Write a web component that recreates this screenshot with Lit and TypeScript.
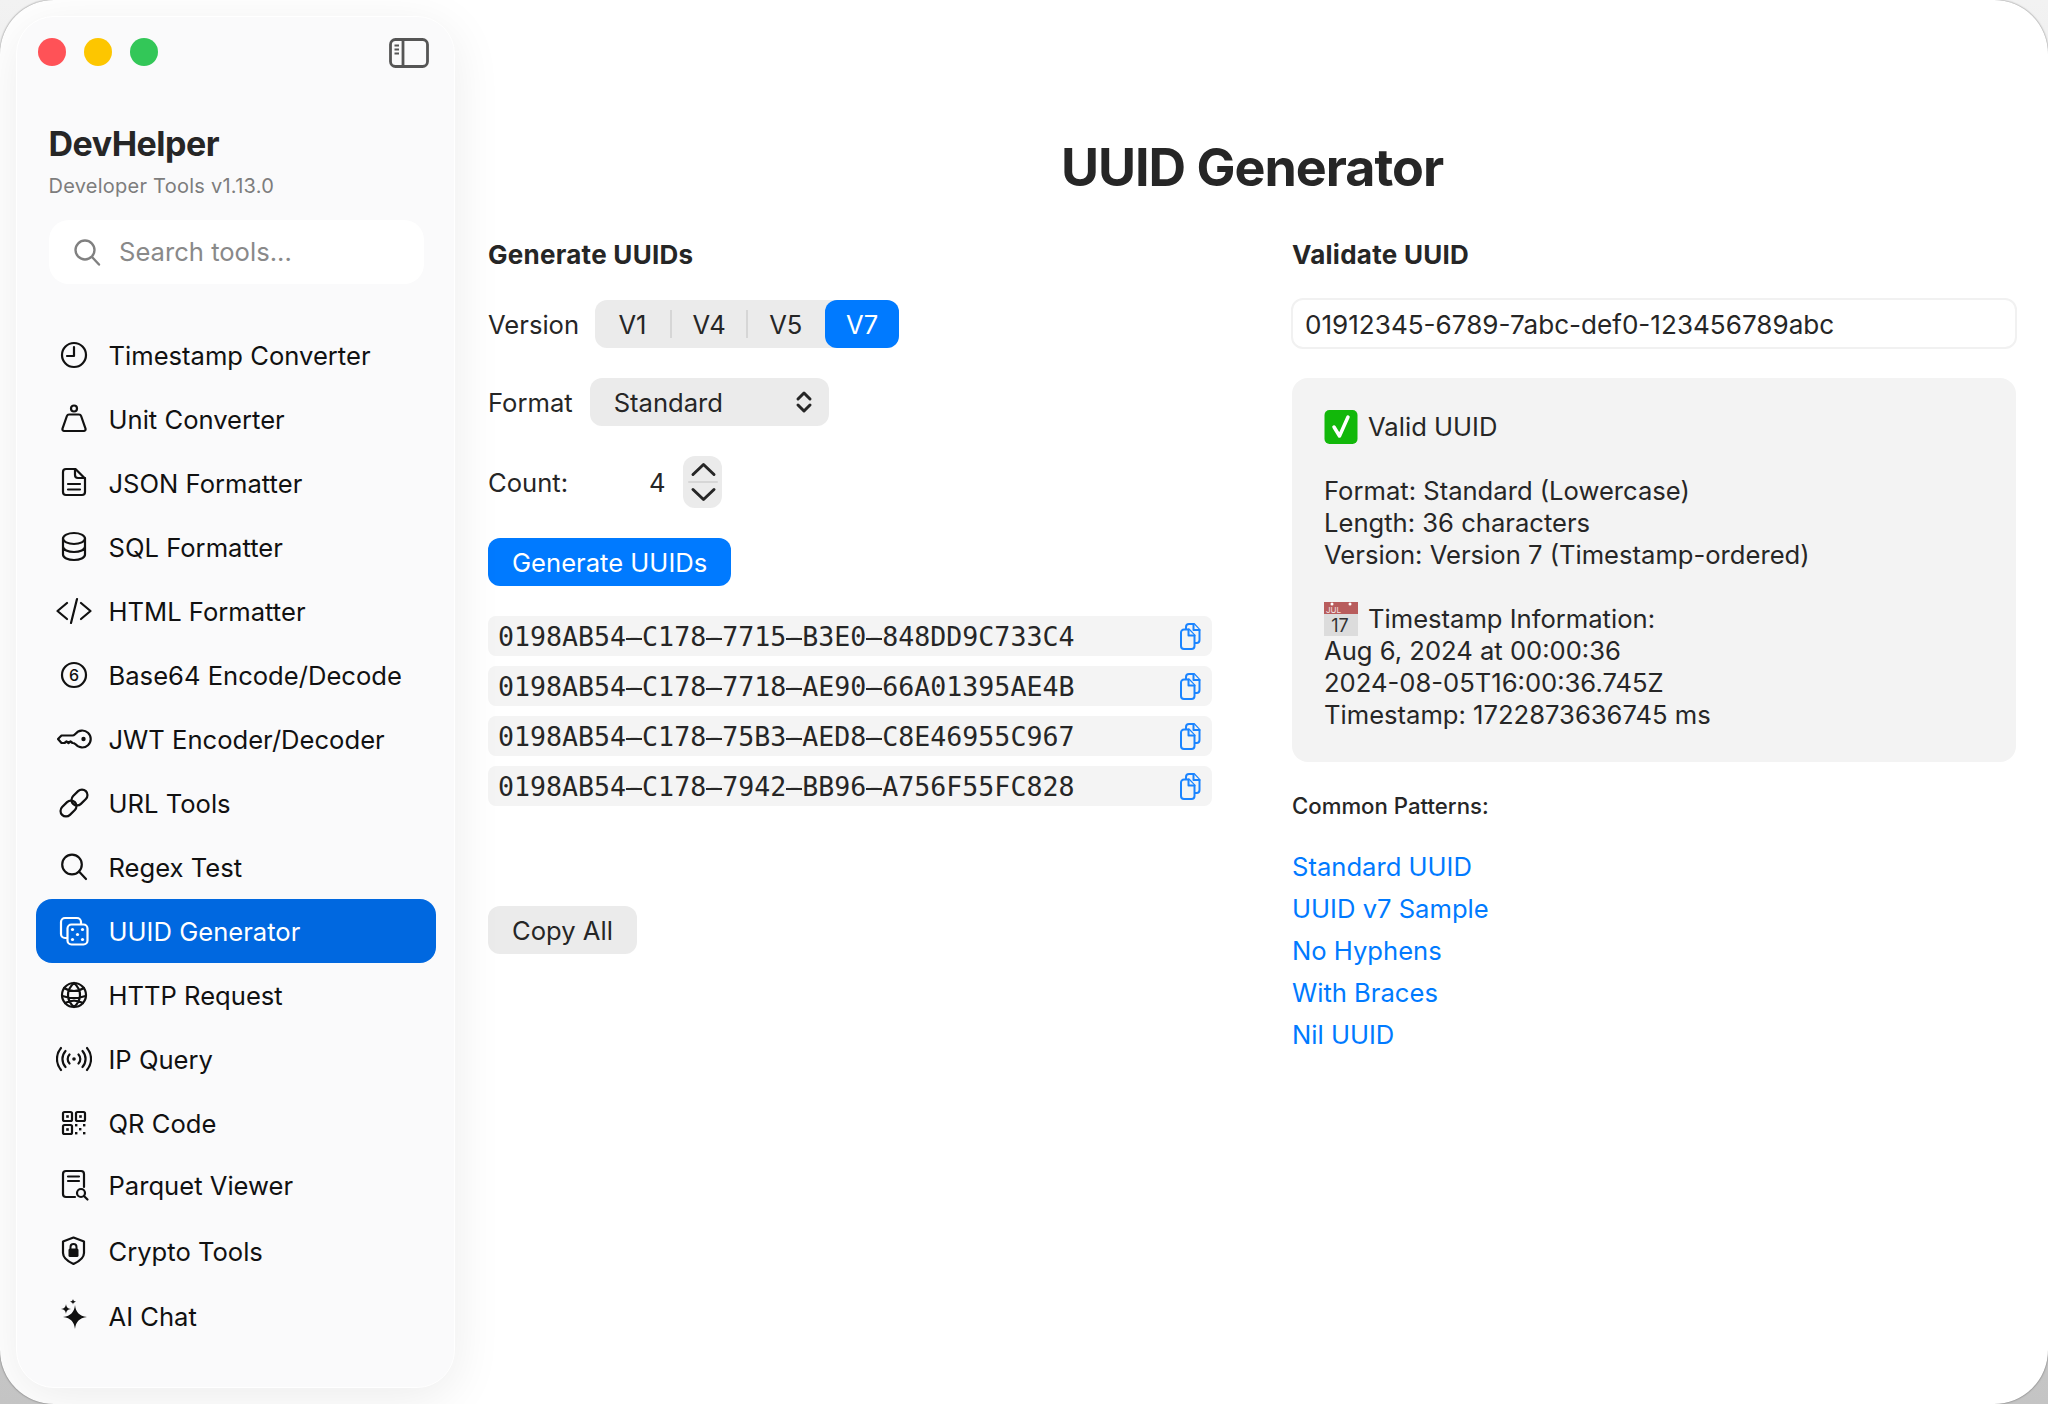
import { LitElement, html, css, svg } from "lit";
import { customElement } from "lit/decorators.js";

const icons: Record<string, unknown> = {
  clock: svg`<circle cx="18" cy="18" r="12"/><path d="M18 10v9h-7"/>`,
  scale: svg`<circle cx="18" cy="7.5" r="3"/><path d="M13 13.5h10q1.6 0 2.1 1.5l4.4 12.6q.5 2-1.5 2.4H8q-2-.4-1.5-2.4L10.900 15q.5-1.500 2.100-1.500z"/>`,
  doc: svg`<path d="M10 4h9.500L29 13.500V27a3 3 0 0 1-3 3H10a3 3 0 0 1-3-3V7a3 3 0 0 1 3-3z"/><path d="M19 4v6a3 3 0 0 0 3 3h7M12 19h12M12 24.500h12"/>`,
  db: svg`<ellipse cx="18" cy="9.500" rx="11" ry="5.500"/><path d="M7 9.500v16c0 3.200 5 5.500 11 5.500s11-2.300 11-5.500v-16M7 17.500c0 3.200 5 5.500 11 5.500s11-2.300 11-5.500"/>`,
  code: svg`<path d="M11 10 1.500 18 11 26M25 10l9.500 8L25 26M21 6l-6 24"/>`,
  six: svg`<circle cx="18" cy="18" r="12"/><text x="18" y="24" text-anchor="middle" class="glyph">6</text>`,
  key: svg`<path d="M19.500 12.800A8.500 8.500 0 1 1 19.500 23.200c-1-.9-1.600-1.200-3-1.200l-2-1.500-2 1.500-2-1.500-2 1.500H5.500L2 18l3.500-3.500h11c1.400 0 2-.8 3-1.700z"/><circle cx="27.500" cy="18" r="2.200" class="solid"/>`,
  link: svg`<rect x="14.500" y="7" width="18" height="11" rx="5.500" transform="rotate(-45 23.500 12.500)"/><rect x="3.500" y="18" width="18" height="11" rx="5.500" transform="rotate(-45 12.500 23.500)"/>`,
  search: svg`<circle cx="16" cy="15.500" r="9.800"/><path d="m23 22.500 7 7.500"/>`,
  dice: svg`<rect x="5" y="5" width="20" height="20" rx="4"/><rect x="11.500" y="11.500" width="20" height="20" rx="4" class="front"/><circle cx="16.500" cy="16.500" r="1.600" class="solid"/><circle cx="26.500" cy="16.500" r="1.600" class="solid"/><circle cx="21.500" cy="21.500" r="1.600" class="solid"/><circle cx="16.500" cy="26.500" r="1.600" class="solid"/><circle cx="26.500" cy="26.500" r="1.600" class="solid"/>`,
  globe: svg`<circle cx="18" cy="18" r="12"/><path d="M18 6c-8 7-8 17 0 24M18 6c8 7 8 17 0 24M8 11c6 4 14 4 20 0M6.500 19c7 2.500 16 2.500 23 0M9 26c6-3 12-3 18 0"/>`,
  ip: svg`<circle cx="18" cy="18" r="1.800" class="solid"/><path d="M13.500 13.500a6.500 6.500 0 0 0 0 9M22.500 13.500a6.500 6.500 0 0 1 0 9M9.500 10a12 12 0 0 0 0 16M26.500 10a12 12 0 0 1 0 16M5 7a17 17 0 0 0 0 22M31 7a17 17 0 0 1 0 22"/>`,
  qr: svg`<rect x="7" y="7" width="9" height="9" rx="1.500"/><rect x="20" y="7" width="9" height="9" rx="1.500"/><rect x="7" y="20" width="9" height="9" rx="1.500"/><rect x="10.200" y="10.200" width="2.600" height="2.600" class="solid"/><rect x="23.200" y="10.200" width="2.600" height="2.600" class="solid"/><rect x="10.200" y="23.200" width="2.600" height="2.600" class="solid"/><rect x="19" y="19" width="2.400" height="2.400" class="solid"/><rect x="27" y="19" width="2.400" height="2.400" class="solid"/><rect x="23" y="23" width="2.400" height="2.400" class="solid"/><rect x="19" y="27" width="2.400" height="2.400" class="solid"/><rect x="27" y="27" width="2.400" height="2.400" class="solid"/>`,
  parquet: svg`<path d="M19 30H10a3 3 0 0 1-3-3V7a3 3 0 0 1 3-3h15a3 3 0 0 1 3 3v13"/><path d="M12 9.500h11M12 14h11"/><circle cx="25" cy="26" r="4"/><path d="m28 29 3.500 3.500"/>`,
  shield: svg`<path d="M17.500 4.500 28 8.500v11.500c0 4.500-5 8.500-10.500 11-5.500-2.500-10.500-6.500-10.500-11V8.500z"/><rect x="12.500" y="15.500" width="10" height="8.500" rx="1.500" class="solid"/><path d="M14.500 15.500v-1.500a3 3 0 0 1 6 0v1.500" class="thin"/>`,
  spark: svg`<path class="solid" d="M19 7c.8 7 4 11 12 12-8 1-11.200 5-12 12-.8-7-4-11-12-12 8-1 11.200-5 12-12zM10 6c.4 3 1.500 4.600 5 5-3.500.4-4.600 2-5 5-.4-3-1.500-4.600-5-5 3.500-.4 4.600-2 5-5zM17 .8c.2 1.700 1 2.600 3 3-2 .4-2.800 1.200-3 3-.2-1.800-1-2.600-3-3 2-.4 2.800-1.300 3-3z"/>`,
};

const nav: [string, string, number][] = [
  ["clock", "Timestamp Converter", 64],
  ["scale", "Unit Converter", 64],
  ["doc", "JSON Formatter", 64],
  ["db", "SQL Formatter", 64],
  ["code", "HTML Formatter", 64],
  ["six", "Base64 Encode/Decode", 64],
  ["key", "JWT Encoder/Decoder", 64],
  ["link", "URL Tools", 64],
  ["search", "Regex Test", 64],
  ["dice", "UUID Generator", 64],
  ["globe", "HTTP Request", 64],
  ["ip", "IP Query", 64],
  ["qr", "QR Code", 64],
  ["parquet", "Parquet Viewer", 60],
  ["shield", "Crypto Tools", 72],
  ["spark", "AI Chat", 58],
];

const uuids = [
  "0198AB54-C178-7715-B3E0-848DD9C733C4",
  "0198AB54-C178-7718-AE90-66A01395AE4B",
  "0198AB54-C178-75B3-AED8-C8E46955C967",
  "0198AB54-C178-7942-BB96-A756F55FC828",
];

const links = ["Standard UUID", "UUID v7 Sample", "No Hyphens", "With Braces", "Nil UUID"];

const dashed = (u: string) =>
  u.split("-").map((part, i) => (i === 0 ? part : html`<span class="dash">-</span>${part}`));

@customElement("app-root")
export class AppRoot extends LitElement {
  static styles = css`
    :host {
      display: block;
      width: 2048px;
      height: 1404px;
      background: linear-gradient(to bottom, #f2f2f2, #c4c4c4);
      font-family: Inter, "Liberation Sans", sans-serif;
      font-size: 25.600px;
      color: #262626;
      overflow: hidden;
    }
    .window {
      width: 2048px;
      height: 1404px;
      border-radius: 54px;
      background: #fff;
      box-shadow: 0 0 2px rgba(0, 0, 0, 0.55);
      display: grid;
      grid-template-columns: 456px 1fr;
      overflow: hidden;
    }
    .side-wrap {
      padding: 16px 1px 16px 16px;
    }
    .sidebar {
      box-sizing: border-box;
      height: 1372px;
      border-radius: 38px;
      background: #fafafb;
      border: 1.500px solid #fff;
      box-shadow: 0 10px 50px rgba(0, 0, 0, 0.08);
      padding: 18px 20px 0 18.500px;
      position: relative;
    }
    .titlebar {
      display: flex;
      align-items: center;
      height: 34px;
      padding-left: 2px;
      gap: 18px;
    }
    .light {
      width: 28px;
      height: 28px;
      border-radius: 50%;
    }
    .red { background: #ff5257; }
    .yellow { background: #fdc600; }
    .green { background: #33c758; }
    .toggle {
      margin-left: auto;
      margin-right: 5.500px;
      margin-top: 1px;
      display: block;
    }
    .brand {
      font-size: 34px;
      font-weight: 700;
      letter-spacing: -0.500px;
      margin: 55px 0 0 13px;
      line-height: 40px;
      color: #262626;
    }
    .version {
      font-size: 20px;
      color: #7d7d7d;
      margin: 8px 0 0 13px;
      line-height: 28px;
      letter-spacing: 0.250px;
    }
    .search {
      margin: 19.500px 10px 0 13.500px;
      height: 64px;
      background: #fff;
      border-radius: 20px;
      display: flex;
      align-items: center;
      padding-left: 24px;
      gap: 18px;
      color: #898989;
    }
    .search svg { flex: none; }
    nav {
      margin-top: 39.500px;
      display: flex;
      flex-direction: column;
    }
    .item {
      display: flex;
      align-items: center;
      gap: 17px;
      padding-left: 20px;
      box-sizing: border-box;
      color: #111;
      border-radius: 16px;
      margin-right: -1.500px;
    }
    .item.on {
      background: #0068e0;
      color: #fff;
    }
    .item svg {
      flex: none;
      fill: none;
      stroke: currentColor;
      stroke-width: 2.200;
      stroke-linecap: round;
      stroke-linejoin: round;
    }
    .item .solid { fill: currentColor; stroke: none; }
    .item .thin { stroke-width: 2; }
    .item .front { fill: #fafafb; }
    .item.on .front { fill: #0068e0; }
    .item .glyph {
      font-size: 16px;
      fill: currentColor;
      stroke: none;
      font-family: Inter, sans-serif;
      font-weight: 500;
    }
    main {
      padding: 0 32px;
      display: flex;
      flex-direction: column;
    }
    h1 {
      margin: 134px 0 0;
      font-size: 52px;
      line-height: 68px;
      font-weight: 700;
      letter-spacing: -1px;
      text-align: center;
      color: #262626;
    }
    .cols {
      margin-top: 36px;
      display: grid;
      grid-template-columns: 724px 724px;
      column-gap: 80px;
    }
    .col { display: flex; flex-direction: column; align-items: flex-start; }
    h2 {
      margin: 0;
      font-size: 26px;
      line-height: 34px;
      font-weight: 700;
      letter-spacing: 0.270px;
    }
    .row {
      display: flex;
      align-items: center;
    }
    .row-version { margin-top: 28px; }
    .row-next { margin-top: 30px; }
    .seg {
      display: flex;
      height: 48px;
      background: #ebebeb;
      border-radius: 12px;
      margin-left: 16px;
    }
    .seg span {
      display: flex;
      align-items: center;
      justify-content: center;
      width: 76.670px;
      position: relative;
      padding-right: 2px;
      box-sizing: border-box;
    }
    .seg span.sep::after {
      content: "";
      position: absolute;
      right: 0;
      top: 10px;
      bottom: 10px;
      width: 2px;
      background: #d6d6d6;
    }
    .seg .active {
      background: #007aff;
      color: #fff;
      border-radius: 12px;
      width: 74px;
      padding-right: 0;
    }
    .select {
      width: 239px;
      height: 48px;
      box-sizing: border-box;
      background: #ebebeb;
      border-radius: 12px;
      margin-left: 17px;
      display: flex;
      align-items: center;
      justify-content: space-between;
      padding: 0 16px 0 24px;
    }
    .chev { fill: none; stroke: currentColor; stroke-width: 3; stroke-linecap: round; stroke-linejoin: round; }
    .count-label { width: 161px; }
    .stepper {
      margin-left: 17.500px;
      width: 39px;
      height: 52px;
      border-radius: 12px;
      background: #ebebeb;
      display: block;
    }
    .btn {
      height: 48px;
      border-radius: 12px;
      display: flex;
      align-items: center;
      padding: 0 24px;
      box-sizing: border-box;
    }
    .primary { background: #007aff; color: #fff; margin-top: 30px; }
    .secondary { background: #ebebeb; margin-top: 100px; }
    .list {
      margin-top: 30px;
      width: 100%;
      display: flex;
      flex-direction: column;
      gap: 10px;
    }
    .uuid {
      height: 40px;
      border-radius: 8px;
      background: #f4f4f4;
      display: flex;
      align-items: center;
      justify-content: space-between;
      padding: 2px 10px 0 10px;
      box-sizing: border-box;
      font-family: "DejaVu Sans Mono", "Liberation Mono", monospace;
      font-size: 26.600px;
    }
    .dash {
      display: inline-block;
      line-height: 32px;
      background: linear-gradient(currentColor, currentColor) 0 17px / 100% 2.200px no-repeat;
    }
    .copy { fill: #f4f4f4; stroke: #1b84ff; stroke-width: 2; stroke-linejoin: round; stroke-linecap: round; margin-top: -2px; flex: none; }
    .input {
      box-sizing: border-box;
      margin: 26px -1px 0;
      width: calc(100% + 2px);
      height: 51px;
      border: 2px solid #f1f1f1;
      border-radius: 12px;
      display: flex;
      align-items: center;
      padding: 2px 0 0 12px;
      font-size: 26.100px;
    }
    .result {
      box-sizing: border-box;
      margin-top: 29px;
      width: 100%;
      height: 384px;
      border-radius: 16px;
      background: #f3f3f3;
      padding: 33px 32px;
      line-height: 32px;
    }
    .result div { min-height: 32px; display: flex; align-items: center; gap: 10px; }
    .emoji { margin: -1px 0; flex: none; }
    .sub {
      margin-top: 30px;
      font-size: 22.200px;
      font-weight: 500;
      line-height: 28px;
    }
    .links {
      margin-top: 31px;
      display: flex;
      flex-direction: column;
      gap: 10px;
      color: #007aff;
      line-height: 32px;
    }
    .cal-text { font-family: Inter, sans-serif; }
  `;

  render() {
    return html`
      <div class="window">
        <div class="side-wrap">
          <aside class="sidebar">
            <div class="titlebar">
              <span class="light red"></span>
              <span class="light yellow"></span>
              <span class="light green"></span>
              <svg class="toggle" width="40" height="30" viewBox="0 0 40 30" fill="none" stroke="#555" stroke-width="2.800">
                <rect x="1.500" y="1.500" width="37" height="27" rx="5"/>
                <path d="M14 1.500v27"/>
                <path d="M5.500 7.500h4.500M5.500 11.500h4.500M5.500 15.500h4.500" stroke-width="1.800"/>
              </svg>
            </div>
            <div class="brand">DevHelper</div>
            <div class="version">Developer Tools v1.13.0</div>
            <div class="search">
              <svg width="28" height="28" viewBox="0 0 28 28" fill="none" stroke="#808080" stroke-width="2.400" stroke-linecap="round">
                <circle cx="12" cy="12" r="9.500"/><path d="m19 19 7 7.500"/>
              </svg>
              <span>Search tools...</span>
            </div>
            <nav>
              ${nav.map(
                ([icon, label, h]) => html`
                  <div class="item ${label === "UUID Generator" ? "on" : ""}" style="height:${h}px">
                    <svg width="36" height="36" viewBox="0 0 36 36">${icons[icon]}</svg>
                    <span>${label}</span>
                  </div>
                `
              )}
            </nav>
          </aside>
        </div>
        <main>
          <h1>UUID Generator</h1>
          <div class="cols">
            <section class="col">
              <h2>Generate UUIDs</h2>
              <div class="row row-version">
                <span>Version</span>
                <div class="seg">
                  <span class="sep">V1</span>
                  <span class="sep">V4</span>
                  <span>V5</span>
                  <span class="active">V7</span>
                </div>
              </div>
              <div class="row row-next">
                <span>Format</span>
                <div class="select">
                  <span>Standard</span>
                  <svg class="chev" width="18" height="24" viewBox="0 0 18 24">
                    <path d="M3 9l6-6 6 6M3 15l6 6 6-6"/>
                  </svg>
                </div>
              </div>
              <div class="row row-next">
                <span class="count-label">Count:</span>
                <span>4</span>
                <svg class="stepper chev" width="39" height="52" viewBox="0 0 39 52">
                  <path d="M10 18.500l10.500-10 10.500 10M10 33.500l10.500 10 10.500-10"/>
                  <path d="M6 26h28" stroke="#d6d6d6" stroke-width="2"/>
                </svg>
              </div>
              <div class="btn primary">Generate UUIDs</div>
              <div class="list">
                ${uuids.map(
                  (u) => html`
                    <div class="uuid">
                      <span>${dashed(u)}</span>
                      <svg class="copy" width="22" height="28" viewBox="0 0 22 28">
                        <path d="M9 2h5l5.500 6v10a3 3 0 0 1-3 3H9a3 3 0 0 1-3-3V5a3 3 0 0 1 3-3z"/>
                        <path d="M13.500 2v6h6"/>
                        <path d="M4 7.500h5l5.500 6V24a3 3 0 0 1-3 3H4a3 3 0 0 1-3-3V10.500a3 3 0 0 1 3-3z"/>
                        <path d="M8.500 7.500v6h6"/>
                      </svg>
                    </div>
                  `
                )}
              </div>
              <div class="btn secondary">Copy All</div>
            </section>
            <section class="col">
              <h2>Validate UUID</h2>
              <div class="input">01912345-6789-7abc-def0-123456789abc</div>
              <div class="result">
                <div>
                  <svg class="emoji" width="34" height="34" viewBox="0 0 34 34">
                    <rect x="0.500" width="33" height="34" rx="5" fill="#12b80a"/>
                    <path d="M10 17l5.500 9 8.500-19" fill="none" stroke="#fff" stroke-width="3.500" stroke-linejoin="round" stroke-linecap="round"/>
                  </svg>
                  <span>Valid UUID</span>
                </div>
                <div></div>
                <div>Format: Standard (Lowercase)</div>
                <div>Length: 36 characters</div>
                <div>Version: Version 7 (Timestamp-ordered)</div>
                <div></div>
                <div>
                  <svg class="emoji" width="34" height="34" viewBox="0 0 34 34">
                    <rect width="34" height="34" fill="#dcdcdc"/>
                    <rect width="34" height="12" fill="#b85c5c"/>
                    <circle cx="8" cy="2" r="1.500" fill="#fff"/>
                    <circle cx="26" cy="2" r="1.500" fill="#fff"/>
                    <text x="2" y="10.500" font-size="8" fill="#f4e3e3" class="cal-text">JUL</text>
                    <text x="16" y="29.500" font-size="18" fill="#333" text-anchor="middle" class="cal-text">17</text>
                  </svg>
                  <span>Timestamp Information:</span>
                </div>
                <div>Aug 6, 2024 at 00:00:36</div>
                <div>2024-08-05T16:00:36.745Z</div>
                <div>Timestamp: 1722873636745 ms</div>
              </div>
              <div class="sub">Common Patterns:</div>
              <div class="links">${links.map((l) => html`<span>${l}</span>`)}</div>
            </section>
          </div>
        </main>
      </div>
    `;
  }
}
